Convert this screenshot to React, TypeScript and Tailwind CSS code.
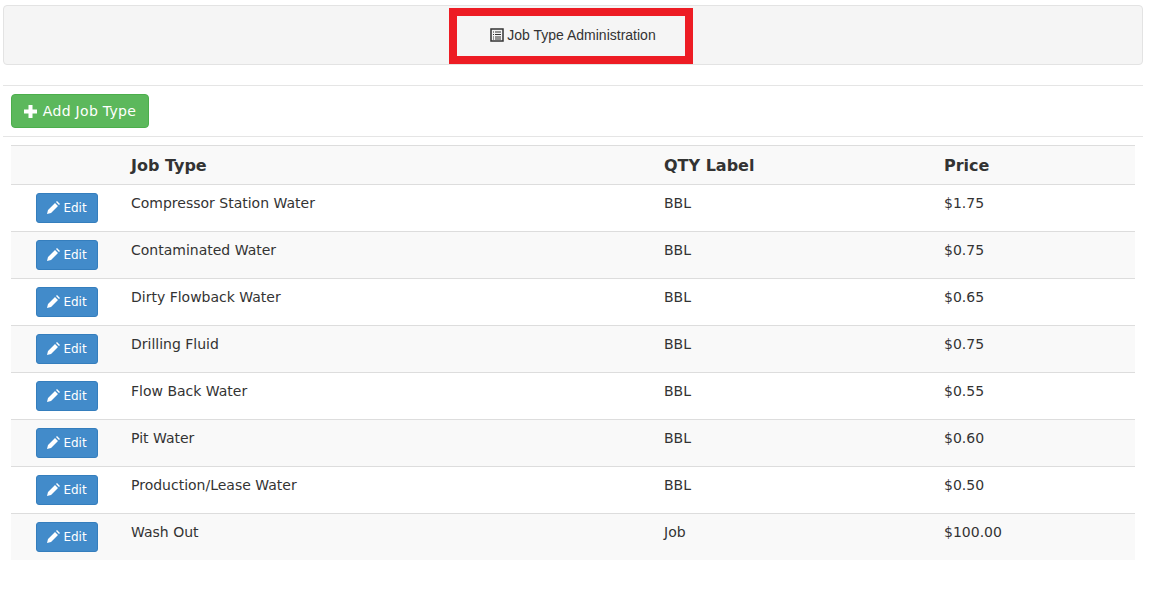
const jobTypes = [
  { name: 'Compressor Station Water', label: 'BBL', price: '$1.75' },
  { name: 'Contaminated Water', label: 'BBL', price: '$0.75' },
  { name: 'Dirty Flowback Water', label: 'BBL', price: '$0.65' },
  { name: 'Drilling Fluid', label: 'BBL', price: '$0.75' },
  { name: 'Flow Back Water', label: 'BBL', price: '$0.55' },
  { name: 'Pit Water', label: 'BBL', price: '$0.60' },
  { name: 'Production/Lease Water', label: 'BBL', price: '$0.50' },
  { name: 'Wash Out', label: 'Job', price: '$100.00' },
];

function ListIcon() {
  return (
    <svg width="14" height="14" viewBox="0 0 14 14" className="inline-block" aria-hidden="true">
      <rect x="1" y="1" width="12" height="12" fill="none" stroke="#333" strokeWidth="1.500" />
      <path d="M3 4h1M5 4h6M3 6.500h1M5 6.500h6M3 9h1M5 9h6M3 11h1M5 11h6" stroke="#333" strokeWidth="1" />
    </svg>
  );
}

function PlusIcon() {
  return (
    <svg width="13" height="13" viewBox="0 0 13 13" aria-hidden="true">
      <path d="M4.500 0h4v4.500H13v4H8.500V13h-4V8.500H0v-4h4.500z" fill="#fff" />
    </svg>
  );
}

function PencilIcon() {
  return (
    <svg width="13" height="13" viewBox="0 0 13 13" aria-hidden="true">
      <path d="M0 13l1-4 7-7 3 3-7 7zM9 1l1-1 3 3-1 1z" fill="#fff" />
    </svg>
  );
}

export default function App() {
  return (
    <div className="w-[1140px] ml-[3px] pt-[5px] font-['DejaVu_Sans',sans-serif] text-sm text-[#333]">
      <div className="h-[60px] flex justify-center items-start pt-[2px] pr-1 bg-[#f5f5f5] border border-[#e3e3e3] rounded">
        <div className="w-[244px] h-[56px] pb-[2px] pl-1 border-8 border-[#ed1c24] flex items-center justify-center gap-[3px] font-['Liberation_Sans',sans-serif]">
          <ListIcon />
          <span>Job Type Administration</span>
        </div>
      </div>

      <div className="mt-5 h-[52px] border-y border-[#e5e5e5] pl-2 pt-2">
        <button className="w-[138px] h-[34px] flex items-center justify-center gap-[6px] bg-[#5cb85c] border border-[#4cae4c] rounded tracking-[0.3px] text-white">
          <PlusIcon />
          Add Job Type
        </button>
      </div>

      <table className="mt-2 ml-2 w-[1124px] table-fixed border-collapse">
        <thead>
          <tr className="h-[39px] bg-[#f9f9f9] border-y border-[#ddd] text-base font-bold text-left">
            <th className="w-[112px]" />
            <th className="w-[533px] px-2 pt-[2px]">Job Type</th>
            <th className="w-[280px] px-2 pt-[2px]">QTY Label</th>
            <th className="px-2 pt-[2px]">Price</th>
          </tr>
        </thead>
        <tbody>
          {jobTypes.map((job, index) => (
            <tr
              key={job.name}
              className={`border-t border-[#ddd] ${index === 7 ? 'h-[46px]' : 'h-[47px]'} ${index % 2 === 1 ? 'bg-[#f9f9f9]' : ''}`}
            >
              <td className="p-2 align-top">
                <button className="ml-[17px] w-[62px] h-[30px] pb-px flex items-center justify-center gap-[3px] bg-[#428bca] border border-[#357ebd] rounded-[3px] text-white text-xs">
                  <PencilIcon />
                  Edit
                </button>
              </td>
              <td className="p-2 align-top">{job.name}</td>
              <td className="p-2 align-top">{job.label}</td>
              <td className="p-2 align-top">{job.price}</td>
            </tr>
          ))}
        </tbody>
      </table>
    </div>
  );
}
